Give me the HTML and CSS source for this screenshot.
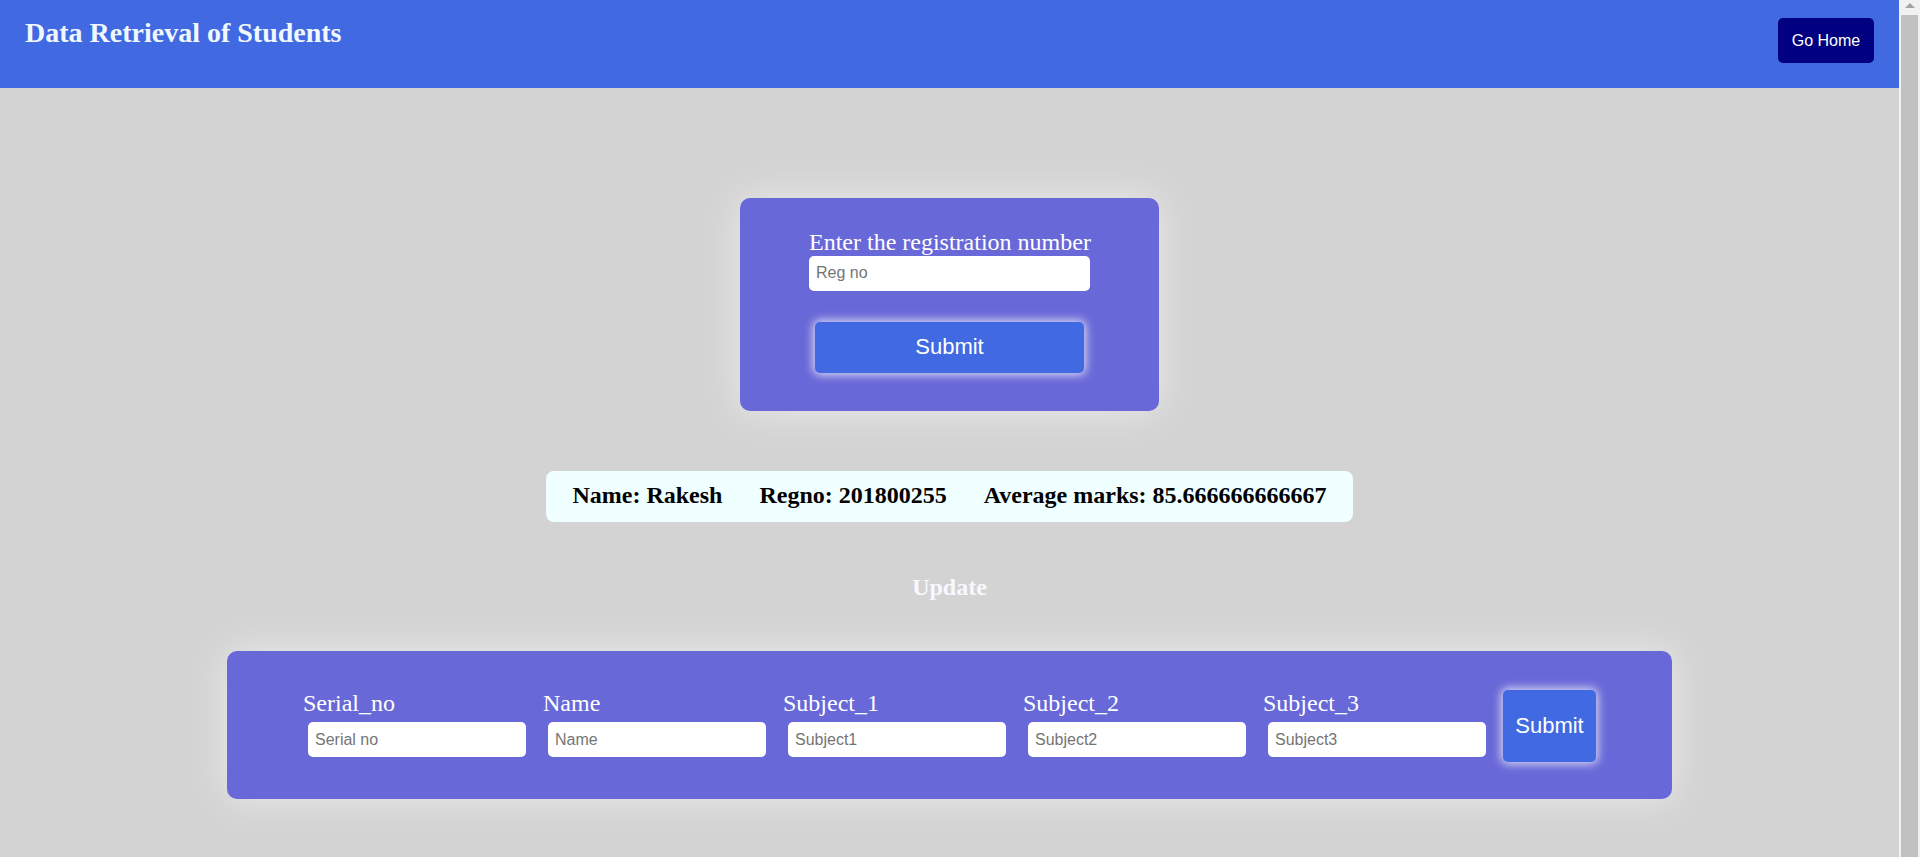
FILE: index.html
```html
<!DOCTYPE html>
<html lang="en">
<head>
<meta charset="utf-8">
<title>Data Retrieval of Students</title>
<link rel="stylesheet" href="styles.css">
</head>
<body>
<div class="page">
  <header class="topbar">
    <h1 class="title">Data Retrieval of Students</h1>
    <button class="home-btn" type="button">Go Home</button>
  </header>
  <main class="main">
    <form class="reg-card">
      <label class="reg-label" for="regno">Enter the registration number</label>
      <input class="reg-input" id="regno" type="text" placeholder="Reg no">
      <button class="submit-btn" type="button">Submit</button>
    </form>

    <div class="info-box">
      <span class="info-item">Name: Rakesh</span>
      <span class="info-item">Regno: 201800255</span>
      <span class="info-item">Average marks: 85.666666666667</span>
    </div>

    <h3 class="update-title">Update</h3>

    <form class="update-card">
      <div class="field">
        <label class="field-label">Serial_no</label>
        <input class="field-input" type="text" placeholder="Serial no">
      </div>
      <div class="field">
        <label class="field-label">Name</label>
        <input class="field-input" type="text" placeholder="Name">
      </div>
      <div class="field">
        <label class="field-label">Subject_1</label>
        <input class="field-input" type="text" placeholder="Subject1">
      </div>
      <div class="field">
        <label class="field-label">Subject_2</label>
        <input class="field-input" type="text" placeholder="Subject2">
      </div>
      <div class="field">
        <label class="field-label">Subject_3</label>
        <input class="field-input" type="text" placeholder="Subject3">
      </div>
      <button class="update-btn" type="button">Submit</button>
    </form>
  </main>
</div>
<div class="scrollbar" aria-hidden="true">
  <div class="scroll-arrow"></div>
  <div class="scroll-thumb"></div>
</div>
</body>
</html>
```
FILE: styles.css
```css
html, body {
  margin: 0;
  padding: 0;
}
body {
  height: 857px;
  overflow: hidden;
  display: flex;
  background: #d3d3d3;
  font-family: "Liberation Serif", "Times New Roman", serif;
}
.page {
  flex: 1;
  min-width: 0;
}
.scrollbar {
  width: 21px;
  background: #f1f1f1;
  display: flex;
  flex-direction: column;
  align-items: center;
}
.scroll-arrow {
  margin-top: 3px;
  width: 0;
  height: 0;
  border-left: 5px solid transparent;
  border-right: 5px solid transparent;
  border-bottom: 5px solid #a3a3a3;
}
.scroll-thumb {
  margin-top: 7px;
  flex: 1;
  width: 17px;
  background: #c1c1c1;
}
.topbar {
  height: 88px;
  background: #4169e1;
  display: flex;
  justify-content: space-between;
  align-items: flex-start;
  padding: 0 25px;
  box-sizing: border-box;
}
.title {
  margin: 17px 0 0;
  font-size: 28px;
  font-weight: bold;
  line-height: 1.15;
  color: #f0f8ff;
}
.home-btn {
  margin-top: 18px;
  height: 45px;
  width: 96px;
  padding: 0;
  border: none;
  border-radius: 5px;
  background: #000080;
  color: #fff;
  font-family: "Liberation Sans", Arial, sans-serif;
  font-size: 16px;
}
.main {
  display: flex;
  flex-direction: column;
  align-items: center;
  padding: 110px 0 40px;
}
.reg-card {
  width: 419px;
  box-sizing: border-box;
  padding: 31px 0 38px;
  background: #6968d8;
  border-radius: 10px;
  box-shadow: 0 0 40px rgba(255, 255, 255, 0.55);
  display: flex;
  flex-direction: column;
  align-items: center;
}
.reg-label {
  width: 281px;
  font-size: 24px;
  line-height: 27.6px;
  color: #fff;
  white-space: nowrap;
}
.reg-input {
  margin-top: -1px;
  width: 281px;
  height: 35px;
  box-sizing: border-box;
  border: none;
  border-radius: 5px;
  padding: 0 7px;
  font-family: "Liberation Sans", Arial, sans-serif;
  font-size: 16px;
  outline: none;
}
.reg-input::placeholder,
.field-input::placeholder {
  color: #757575;
}
.submit-btn {
  margin-top: 31px;
  width: 269px;
  height: 51px;
  border: none;
  border-radius: 5px;
  background: #4169e1;
  color: #fff;
  font-family: "Liberation Sans", Arial, sans-serif;
  font-size: 22px;
  box-shadow: 0 0 10px 2px rgba(255, 255, 255, 0.75);
}
.info-box {
  margin-top: 60px;
  display: flex;
  gap: 37px;
  padding: 11px 26px 13px;
  background: #f0ffff;
  border-radius: 8px;
}
.info-item {
  font-size: 24px;
  font-weight: bold;
  line-height: 27.6px;
  color: #000;
  white-space: nowrap;
}
.update-title {
  margin: 52px 0 49px;
  font-size: 24px;
  font-weight: bold;
  line-height: 27.6px;
  color: #f8f8ff;
}
.update-card {
  width: 1445px;
  box-sizing: border-box;
  padding: 38px 0 37px;
  background: #6968d8;
  border-radius: 10px;
  box-shadow: 0 0 40px rgba(255, 255, 255, 0.55);
  display: flex;
  justify-content: center;
  align-items: flex-start;
  gap: 12px;
}
.field {
  display: flex;
  flex-direction: column;
  align-items: flex-start;
}
.field-label {
  font-size: 24px;
  line-height: 27.6px;
  color: #fff;
  white-space: nowrap;
  margin-top: 1px;
}
.field-input {
  margin: 5px;
  width: 218px;
  height: 35px;
  box-sizing: border-box;
  border: none;
  border-radius: 5px;
  padding: 0 7px;
  font-family: "Liberation Sans", Arial, sans-serif;
  font-size: 16px;
  outline: none;
}
.update-btn {
  margin-top: 1px;
  width: 93px;
  height: 72px;
  padding: 0;
  border: none;
  border-radius: 5px;
  background: #4169e1;
  color: #fff;
  font-family: "Liberation Sans", Arial, sans-serif;
  font-size: 22px;
  box-shadow: 0 0 10px 2px rgba(255, 255, 255, 0.75);
}
```
